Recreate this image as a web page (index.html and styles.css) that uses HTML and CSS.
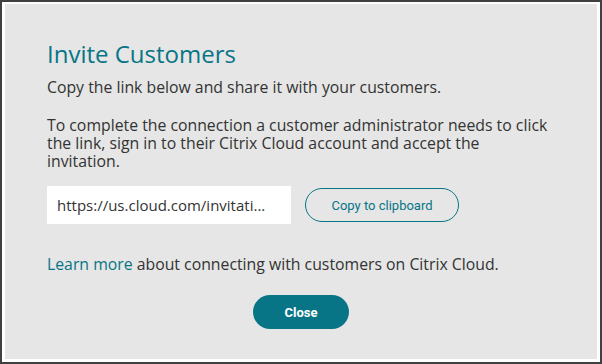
FILE: index.html
```html
<!DOCTYPE html>
<html lang="en">
<head>
    <meta charset="UTF-8">
    <title>Invite Customers</title>
    <link rel="stylesheet" href="styles.css">
</head>
<body>
    <div class="frame">
        <div class="dialog">
            <h1>Invite Customers</h1>
            <p class="lead">Copy the link below and share it with your customers.</p>
            <p class="info">To complete the connection a customer administrator needs to click the link, sign in to their Citrix Cloud account and accept the invitation.</p>

            <div class="link-row">
                <div class="link-box">https://us.cloud.com/invitati...</div>
                <button class="btn-outline">Copy to clipboard</button>
            </div>

            <p class="more"><a href="#">Learn more</a> about connecting with customers on Citrix Cloud.</p>

            <div class="actions">
                <button class="btn-primary">Close</button>
            </div>
        </div>
    </div>
</body>
</html>
```

FILE: styles.css
```css
:root {
    --teal: #087587;
    --text: #333333;
    --panel: #e5e6e5;
}

* {
    box-sizing: border-box;
    margin: 0;
    padding: 0;
}

body {
    font-family: "Open Sans", "Liberation Sans", sans-serif;
    color: var(--text);
    background: white;
}

.frame {
    width: 602px;
    height: 364px;
    border: 2px solid #404040;
    padding: 2px 3px 3px 3px;
    background: white;
}

.dialog {
    background: var(--panel);
    height: 100%;
    padding: 35px 46px 0 42px;
}

h1 {
    font-size: 24px;
    font-weight: 400;
    color: var(--teal);
    line-height: 30px;
}

.lead {
    font-size: 15.8px;
    line-height: 19px;
    margin-top: 9px;
}

.info {
    font-size: 15.8px;
    line-height: 18px;
    margin-top: 19px;
}

.link-row {
    display: flex;
    align-items: center;
    gap: 14px;
    margin-top: 16px;
}

.link-box {
    flex: none;
    background: white;
    width: 244px;
    height: 38px;
    padding: 0 10px;
    font-size: 15px;
    line-height: 38px;
    white-space: nowrap;
}

button {
    font-family: Roboto, "Liberation Sans", sans-serif;
    border-radius: 17px;
    cursor: pointer;
}

.btn-outline {
    width: 154px;
    height: 34px;
    border: 1px solid var(--teal);
    background: transparent;
    color: var(--teal);
    font-size: 13px;
}

.more {
    font-size: 15.8px;
    line-height: 19px;
    margin-top: 31px;
}

.more a {
    color: var(--teal);
    text-decoration: none;
}

.actions {
    display: flex;
    margin-top: 21px;
    padding-left: 206px;
}

.btn-primary {
    width: 96px;
    height: 34px;
    border: none;
    background: var(--teal);
    color: white;
    font-size: 13px;
    font-weight: 700;
}
```
